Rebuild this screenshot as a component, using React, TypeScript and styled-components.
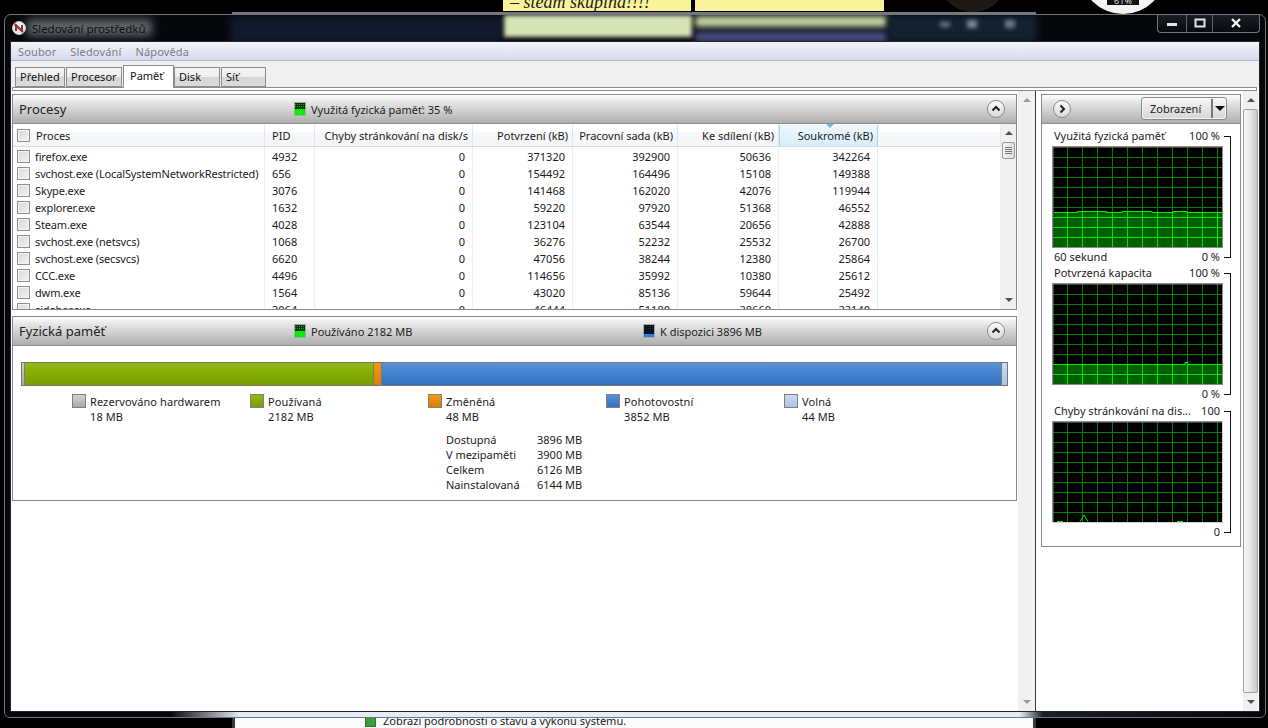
import React from "react";
import styled, { createGlobalStyle } from "styled-components";

const Global = createGlobalStyle`
  html, body { margin: 0; padding: 0; background: #000; }
  * { box-sizing: border-box; }
  #root { width: 1268px; height: 728px; overflow: hidden; }
`;

const UI = `"Noto Sans", "Open Sans", sans-serif`;

const Desktop = styled.div`
  position: relative;
  width: 1268px;
  height: 728px;
  overflow: hidden;
  background: #000;
  font-family: ${UI};
  font-size: 11px;
  color: #1c1c1c;
`;

const Sticky = styled.div<{ $left: number; $width: number }>`
  position: absolute;
  left: ${(p) => p.$left}px;
  top: 0;
  width: ${(p) => p.$width}px;
  height: 11px;
  background: #f9f39a;
  overflow: hidden;
`;
const StickyText = styled.div`
  margin: -8px 0 0 7px;
  font-family: "Liberation Serif", serif;
  font-style: italic;
  font-size: 18px;
  line-height: 20px;
  color: #20201a;
  white-space: nowrap;
`;
const ClockGadget = styled.div`
  position: absolute;
  left: 940px;
  top: -50px;
  width: 66px;
  height: 62px;
  border-radius: 50%;
  background: radial-gradient(circle at 50% 50%, #15140f 0, #1d1c16 78%, #5b584a 90%, #24231c 100%);
`;
const GaugeGadget = styled.div`
  position: absolute;
  left: 1080px;
  top: -72px;
  width: 86px;
  height: 86px;
  border-radius: 50%;
  background: radial-gradient(circle at 50% 50%, #fff 0, #f2f2f2 70%, #cfcfcf 100%);
`;
const GaugeValue = styled.div`
  position: absolute;
  left: 1107px;
  top: 0;
  width: 32px;
  height: 5px;
  background: #111;
  color: #ddd;
  font-size: 9px;
  line-height: 2px;
  text-align: center;
  overflow: hidden;
`;
const BackLine = styled.div`
  position: absolute;
  left: 232px;
  top: 12px;
  width: 804px;
  height: 2px;
  background: #77787c;
`;
const BackWindow = styled.div`
  position: absolute;
  left: 232px;
  top: 700px;
  width: 804px;
  height: 28px;
  border-left: 3px solid #3a3a3a;
  border-right: 3px solid #3a3a3a;
  background: #fbfbfb;
  display: flex;
  align-items: flex-start;
  gap: 7px;
  padding: 14px 0 0 130px;
  font-size: 11px;
  line-height: 14px;
`;
const BackIcon = styled.span`
  width: 11px;
  height: 11px;
  margin-top: 2px;
  background: #38a03a;
  border: 1px solid #2a7a2c;
`;

const Window = styled.div`
  position: absolute;
  left: 4px;
  top: 14px;
  width: 1262px;
  height: 704px;
  border: 1px solid #71767c;
  border-radius: 7px 7px 6px 6px;
  background: #05070b;
  display: flex;
  flex-direction: column;
  padding: 0 5px;
  overflow: hidden;
`;
const GlassBlob = styled.div<{ $l: number; $t: number; $w: number; $h: number; $c: string; $b: number }>`
  position: absolute;
  left: ${(p) => p.$l}px;
  top: ${(p) => p.$t}px;
  width: ${(p) => p.$w}px;
  height: ${(p) => p.$h}px;
  background: ${(p) => p.$c};
  filter: blur(${(p) => p.$b}px);
`;
const TitleBar = styled.div`
  position: relative;
  height: 26px;
  display: flex;
  align-items: center;
  gap: 6px;
  padding: 0 0 0 2px;
  flex: none;
`;
const TitleText = styled.span`
  position: relative;
  font-size: 11.5px;
  letter-spacing: -0.05px;
  color: #0c0e10;
`;
const Controls = styled.div`
  position: absolute;
  right: 0;
  top: -1px;
  width: 103px;
  height: 19px;
  display: grid;
  grid-template-columns: 29px 26px 1fr;
  border: 1px solid #70757c;
  border-top: none;
  border-radius: 0 0 4px 4px;
  background: linear-gradient(#1a1e24, #080a0d);
`;
const ControlBtn = styled.div`
  display: flex;
  align-items: center;
  justify-content: center;
  border-right: 1px solid #5e636a;
  &:last-child { border-right: none; }
`;
const Client = styled.div`
  position: relative;
  height: 671px;
  flex: none;
  border: 1px solid #20262c;
  background: #fff;
  display: flex;
  flex-direction: column;
`;
const BottomGlass = styled.div`
  flex: none;
  height: 5px;
  margin: 0 -5px;
  background: linear-gradient(90deg, #05070b 0, #05070b 165px, #e4edf6 235px, #e4edf6 1015px, #1a2028 1038px, #05070b 100%);
`;

const MenuBar = styled.div`
  height: 19px;
  flex: none;
  display: flex;
  gap: 14px;
  padding: 1px 0 0 7px;
  align-items: center;
  letter-spacing: 0.15px;
  color: #7d7d7d;
  background: linear-gradient(#f3f4fb, #e8ebf6 35%, #d5daf0);
  border-bottom: 1px solid #b5b8ca;
`;
const MenuItem = styled.span``;
const TabStrip = styled.div`
  height: 26px;
  flex: none;
  background: #f0f0f0;
  display: flex;
  align-items: flex-end;
  padding-left: 4px;
  position: relative;
  z-index: 1;
`;
const Tab = styled.div<{ $w: number; $active?: boolean }>`
  width: ${(p) => p.$w}px;
  height: ${(p) => (p.$active ? 23 : 20)}px;
  margin-right: ${(p) => (p.$active ? 0 : 1)}px;
  margin-bottom: ${(p) => (p.$active ? -1 : 0)}px;
  border: 1px solid #8c8c8c;
  border-bottom: ${(p) => (p.$active ? "none" : "1px solid #8c8c8c")};
  background: ${(p) => (p.$active ? "#fff" : "linear-gradient(#f6f6f6, #eeeeee 50%, #d6d6d6 52%, #dcdcdc)")};
  padding: ${(p) => (p.$active ? "2px 0 0 6px" : "1px 0 0 4px")};
  line-height: 15px;
  color: #111;
`;
const TabPanel = styled.div`
  height: 4px;
  flex: none;
  margin: 0 2px 0 1px;
  border: 1px solid #8c8c8c;
  background: #fff;
`;
const Content = styled.div`
  flex: 1;
  display: flex;
  min-height: 0;
`;
const LeftColumn = styled.div`
  width: 1005px;
  margin-left: 1px;
  padding-top: 3px;
  display: flex;
  flex-direction: column;
  gap: 6px;
  flex: none;
`;
const Panel = styled.section<{ $h: number }>`
  height: ${(p) => p.$h}px;
  flex: none;
  border: 1px solid #8a8a8a;
  display: flex;
  flex-direction: column;
  background: #fff;
`;
const PanelHeader = styled.header`
  position: relative;
  height: 29px;
  flex: none;
  display: flex;
  align-items: center;
  background: linear-gradient(#fdfdfd, #e6e6e6 25%, #c9c9c9 65%, #adadad);
  border-bottom: 1px solid #8f8f8f;
  font-size: 11px;
`;
const PanelTitle = styled.h2`
  margin: 0;
  width: 281px;
  padding-left: 6px;
  font-size: 13px;
  font-weight: 400;
  color: #222;
  flex: none;
`;
const Indicator = styled.div<{ $w?: number }>`
  display: flex;
  align-items: center;
  gap: 5px;
  width: ${(p) => (p.$w ? `${p.$w}px` : "auto")};
  flex: none;
  white-space: nowrap;
`;
const RoundWrap = styled.span<{ $left?: boolean }>`
  position: absolute;
  top: 5px;
  ${(p) => (p.$left ? "left: 11px;" : "right: 11px;")}
  width: 18px;
  height: 18px;
`;

const Table = styled.div`
  flex: 1;
  display: flex;
  min-height: 0;
`;
const TableMain = styled.div`
  flex: 1;
  overflow: hidden;
`;
const COLS = "252px 50px 158px 100px 105px 101px 99px 1fr";
const HeadRow = styled.div`
  display: grid;
  grid-template-columns: ${COLS};
  height: 23px;
  margin-bottom: 1px;
  padding-top: 1px;
  background: linear-gradient(#fff, #fff 8px, #f6f7f9 9px, #f4f5f7);
  border-bottom: 1px solid #d9dde2;
`;
const HeadCell = styled.div<{ $right?: boolean; $sorted?: boolean; $pad?: number }>`
  position: relative;
  display: flex;
  align-items: center;
  gap: 6px;
  justify-content: ${(p) => (p.$right ? "flex-end" : "flex-start")};
  padding: ${(p) => (p.$right ? "0 4px 0 0" : `0 0 0 ${p.$pad ?? 4}px`)};
  border-right: 1px solid ${(p) => (p.$sorted ? "#a5d8f5" : "#e2e6eb")};
  ${(p) => (p.$sorted ? "border-left: 1px solid #a5d8f5; background: linear-gradient(#eef8fe, #e5f4fc 40%, #d7eefa);" : "")}
  white-space: nowrap;
`;
const SortMark = styled.span`
  position: absolute;
  top: -1px;
  left: 46px;
  width: 0;
  height: 0;
  border: 4px solid transparent;
  border-top: 4px solid #7fb6dc;
  border-bottom: none;
`;
const Row = styled.div`
  display: grid;
  grid-template-columns: ${COLS};
  height: 17px;
`;
const Cell = styled.div<{ $right?: boolean; $sorted?: boolean; $pad?: number; $tight?: boolean }>`
  display: flex;
  align-items: center;
  gap: 5px;
  justify-content: ${(p) => (p.$right ? "flex-end" : "flex-start")};
  padding: ${(p) => (p.$right ? "0 7px 0 0" : `0 0 0 ${p.$pad ?? 7}px`)};
  border-right: 1px solid ${(p) => (p.$sorted ? "#d5ecfa" : "#e9eef5")};
  white-space: nowrap;
  color: #1a1a1a;
  letter-spacing: ${(p) => (p.$tight ? "-0.14px" : "0")};
`;
const Check = styled.span`
  width: 13px;
  height: 13px;
  flex: none;
  border: 1px solid #8e8f8f;
  background: linear-gradient(135deg, #d8d8d8, #f3f3f3);
  box-shadow: inset 0 0 0 1px #f4f4f4;
`;
const ScrollTrack = styled.div<{ $w: number }>`
  width: ${(p) => p.$w}px;
  flex: none;
  display: flex;
  flex-direction: column;
  background: #f0f0f0;
`;
const ScrollBtn = styled.div<{ $h?: number }>`
  height: ${(p) => p.$h ?? 18}px;
  flex: none;
  display: flex;
  align-items: center;
  justify-content: center;
`;
const Arrow = styled.span<{ $down?: boolean; $c?: string }>`
  width: 0;
  height: 0;
  border-left: 4px solid transparent;
  border-right: 4px solid transparent;
  ${(p) => (p.$down ? `border-top: 4px solid ${p.$c ?? "#505050"};` : `border-bottom: 4px solid ${p.$c ?? "#505050"};`)}
`;
const ScrollSpace = styled.div`
  flex: 1;
`;
const ListThumb = styled.div`
  height: 17px;
  flex: none;
  margin: 0 1px;
  border: 1px solid #9a9a9a;
  border-radius: 2px;
  background: linear-gradient(90deg, #f5f5f5, #dcdcdc);
  display: flex;
  flex-direction: column;
  justify-content: center;
  align-items: center;
  gap: 1px;
`;
const Grip = styled.span`
  width: 7px;
  height: 1px;
  background: #777;
`;
const BigThumb = styled.div`
  flex: 1;
  margin: 0;
  border: 1px solid #a0a0a0;
  border-radius: 2px;
  background: linear-gradient(90deg, #f5f5f5, #e8e8e8 45%, #c8c8c8);
`;

const MemBar = styled.div`
  height: 24px;
  margin: 16px 8px 0;
  display: flex;
  border: 1px solid #767676;
  flex: none;
`;
const MemSeg = styled.div<{ $w?: number; $a: string; $b: string }>`
  ${(p) => (p.$w ? `width: ${p.$w}px; flex: none;` : "flex: 1;")}
  background: linear-gradient(${(p) => p.$a}, ${(p) => p.$b});
  border-right: 1px solid #7b7b7b;
  &:last-child { border-right: none; }
`;
const Legend = styled.div`
  display: grid;
  grid-template-columns: repeat(5, 178px);
  margin: 8px 0 0 59px;
`;
const LegendItem = styled.div`
  display: grid;
  grid-template-columns: 14px auto;
  column-gap: 4px;
  align-items: start;
  line-height: 15px;
  letter-spacing: 0.09px;
`;
const Swatch = styled.span<{ $a: string; $b: string }>`
  width: 14px;
  height: 14px;
  border: 1px solid #808080;
  background: linear-gradient(${(p) => p.$a}, ${(p) => p.$b});
`;
const LegendName = styled.span``;
const LegendValue = styled.span`
  grid-column: 2;
`;
const Stats = styled.div`
  margin: 8px 0 0 433px;
  display: grid;
  grid-template-columns: 91px auto;
  line-height: 15px;
  justify-content: start;
`;
const StatCell = styled.span``;

const MidScroll = styled(ScrollTrack)`
  margin-left: 1px;
  border-right: 1px solid #3c3c3c;
`;
const RightArea = styled.div`
  flex: 1;
  display: flex;
  padding-left: 5px;
  min-width: 0;
`;
const GraphColumn = styled.div`
  width: 200px;
  flex: none;
  padding-top: 3px;
  margin-right: 2px;
`;
const GraphPanel = styled.section`
  height: 453px;
  border: 1px solid #8a8a8a;
  display: flex;
  flex-direction: column;
`;
const ViewButton = styled.div`
  position: absolute;
  right: 13px;
  top: 2px;
  width: 86px;
  height: 23px;
  border: 1px solid #8a8a8a;
  border-radius: 3px;
  background: linear-gradient(#f6f6f6, #e6e6e6 50%, #d6d6d6);
  display: flex;
  align-items: center;
  box-shadow: inset 0 0 0 1px rgba(255, 255, 255, 0.7);
`;
const ViewLabel = styled.span`
  width: 71px;
  padding-left: 8px;
  flex: none;
  border-right: 2px solid #777;
  line-height: 19px;
`;
const ViewArrow = styled.span`
  margin-left: 2px;
  width: 0;
  height: 0;
  border-left: 5px solid transparent;
  border-right: 5px solid transparent;
  border-top: 5px solid #111;
`;
const GraphList = styled.div`
  padding: 5px 0 0 10px;
  display: flex;
  flex-direction: column;
  gap: 1px;
`;
const GraphBlock = styled.div`
  display: flex;
  width: 180px;
  &:last-child { margin-top: 1px; }
`;
const GraphBody = styled.div`
  width: 171px;
  flex: none;
  line-height: 13px;
`;
const GraphTop = styled.div`
  display: flex;
  justify-content: space-between;
  padding: 0 3px 0 2px;
  height: 17px;
  white-space: nowrap;
`;
const GraphBottom = styled(GraphTop)`
  padding-top: 2px;
`;
const Bracket = styled.div`
  width: 7px;
  margin: 7px 0 7px 1px;
  flex: none;
  border: 1.5px solid #111;
  border-left: none;
`;
const GraphSvg = styled.svg`
  display: block;
`;

function RoundButton({ dir, left }: { dir: "up" | "right"; left?: boolean }) {
  const d = dir === "up" ? "M5.5 10.5 L9 7 L12.5 10.5" : "M7.5 5.5 L11 9 L7.5 12.5";
  return (
    <RoundWrap $left={left}>
      <svg width="18" height="18" viewBox="0 0 18 18">
        <defs>
          <linearGradient id="rb" x1="0" y1="0" x2="0" y2="1">
            <stop offset="0" stopColor="#fdfdfd" />
            <stop offset="1" stopColor="#d8d8d8" />
          </linearGradient>
        </defs>
        <circle cx="9" cy="9" r="8.5" fill="url(#rb)" stroke="#8a8a8a" />
        <path d={d} fill="none" stroke="#222" strokeWidth="2" />
      </svg>
    </RoundWrap>
  );
}

function MiniIndicator({ kind }: { kind: "green" | "blue" }) {
  const green = kind === "green";
  return (
    <svg width="12" height="14" viewBox="0 0 12 14">
      <rect x="0.5" y="0.5" width="11" height="13" fill={green ? "#00f000" : "#2f7de0"} stroke="#a8a8a8" />
      <rect x="1" y="1" width="10" height={green ? 6 : 9} fill={green ? "#063406" : "#06121c"} />
      <path d="M1 2.5H11M1 4.5H11" stroke={green ? "#1d9a1d" : "#10314e"} strokeWidth="1" strokeDasharray="1 1" />
    </svg>
  );
}

function AppLogo() {
  return (
    <svg width="14" height="14" viewBox="0 0 14 14">
      <circle cx="7" cy="7" r="6.5" fill="#ecebe8" stroke="#c9c6c0" />
      <path d="M4 10V4L10 10V4" fill="none" stroke="#1d2430" strokeWidth="1.6" />
      <path d="M2.5 3.5L11 11" stroke="#d21f1f" strokeWidth="1.8" />
    </svg>
  );
}

function Graph({ line, fillTop, spike }: { line?: string; fillTop?: number; spike?: boolean }) {
  const w = 171;
  const h = 102;
  const vs = Array.from({ length: 11 }, (_, i) => 15 * (i + 1));
  const hs = Array.from({ length: 9 }, (_, i) => 11 + 10 * i);
  return (
    <GraphSvg width={w} height={h} viewBox={`0 0 ${w} ${h}`}>
      <rect width={w} height={h} fill="#000" />
      {vs.map((x) => (
        <line key={x} x1={x + 0.5} x2={x + 0.5} y1={0} y2={h} stroke="#008000" />
      ))}
      {hs.map((y) => (
        <line key={y} y1={y + 0.5} y2={y + 0.5} x1={0} x2={w} stroke="#008000" />
      ))}
      {line && fillTop !== undefined && (
        <g>
          <path d={`${line}V102H2Z`} fill="#006000" />
          {vs.map((x) => (
            <line key={x} x1={x + 0.5} x2={x + 0.5} y1={fillTop} y2={h} stroke="#00e400" />
          ))}
          {hs
            .filter((y) => y > fillTop)
            .map((y) => (
              <line key={y} y1={y + 0.5} y2={y + 0.5} x1={0} x2={w} stroke="#00e400" />
            ))}
          <path d={line} fill="none" stroke="#00ee00" strokeWidth="1" />
        </g>
      )}
      {spike && (
        <path d="M5 100.5H11M28 100.5L32 94L36 100.5M125 100.5H131" fill="none" stroke="#00ee00" strokeWidth="1" />
      )}
      <path d={`M0.5 ${h}V0.5H${w - 0.5}`} fill="none" stroke="#8c8c8c" strokeWidth="2" />
      <path d={`M0 ${h - 0.5}H${w - 0.5}V0`} fill="none" stroke={spike ? "#cfcfcf" : "#8c8c8c"} strokeWidth="1" />
    </GraphSvg>
  );
}

const LINE1 = "M2 66.5H25V65.5H55V66.5H70V65.5H100V66.5H121V65.5H135V66.5H171";
const LINE2 = "M2 81.5H133V79.5H136V81.5H171";

const rows: [string, number, number, number, number, number, number][] = [
  ["firefox.exe", 4932, 0, 371320, 392900, 50636, 342264],
  ["svchost.exe (LocalSystemNetworkRestricted)", 656, 0, 154492, 164496, 15108, 149388],
  ["Skype.exe", 3076, 0, 141468, 162020, 42076, 119944],
  ["explorer.exe", 1632, 0, 59220, 97920, 51368, 46552],
  ["Steam.exe", 4028, 0, 123104, 63544, 20656, 42888],
  ["svchost.exe (netsvcs)", 1068, 0, 36276, 52232, 25532, 26700],
  ["svchost.exe (secsvcs)", 6620, 0, 47056, 38244, 12380, 25864],
  ["CCC.exe", 4496, 0, 114656, 35992, 10380, 25612],
  ["dwm.exe", 1564, 0, 43020, 85136, 59644, 25492],
  ["sidebar.exe", 3064, 0, 46444, 51180, 28660, 22140],
];

const legend = [
  { name: "Rezervováno hardwarem", value: "18 MB", a: "#d2d2d2", b: "#a9a9a9" },
  { name: "Používaná", value: "2182 MB", a: "#8fba0b", b: "#789e00" },
  { name: "Změněná", value: "48 MB", a: "#f39a10", b: "#db7e00" },
  { name: "Pohotovostní", value: "3852 MB", a: "#5a90d6", b: "#3272c4" },
  { name: "Volná", value: "44 MB", a: "#c9dcf2", b: "#a9c5e8" },
];

const stats = [
  ["Dostupná", "3896 MB"],
  ["V mezipaměti", "3900 MB"],
  ["Celkem", "6126 MB"],
  ["Nainstalovaná", "6144 MB"],
];

export default function App() {
  return (
    <Desktop>
      <Global />
      <Sticky $left={503} $width={188}>
        <StickyText>– steam skupina!!!!</StickyText>
      </Sticky>
      <Sticky $left={695} $width={189} />
      <ClockGadget />
      <GaugeGadget />
      <GaugeValue>61%</GaugeValue>
      <BackLine />
      <BackWindow>
        <BackIcon />
        Zobrazí podrobnosti o stavu a výkonu systému.
      </BackWindow>
      <Window>
        <GlassBlob $l={22} $t={4} $w={125} $h={17} $c="#62666a" $b={5} />
        <GlassBlob $l={225} $t={2} $w={273} $h={26} $c="#111a2c" $b={3} />
        <GlassBlob $l={499} $t={0} $w={188} $h={22} $c="#d6e3b2" $b={2} />
        <GlassBlob $l={690} $t={1} $w={193} $h={11} $c="#c9d9a6" $b={3} />
        <GlassBlob $l={690} $t={17} $w={193} $h={10} $c="#4c5288" $b={3} />
        <GlassBlob $l={882} $t={0} $w={150} $h={27} $c="#14222f" $b={3} />
        <GlassBlob $l={935} $t={7} $w={10} $h={5} $c="#6a7a8a" $b={2} />
        <GlassBlob $l={962} $t={5} $w={10} $h={8} $c="#7a8a9a" $b={2} />
        <GlassBlob $l={1000} $t={5} $w={10} $h={8} $c="#6a7a8a" $b={2} />
        <TitleBar>
          <AppLogo />
          <TitleText>Sledování prostředků</TitleText>
          <Controls>
            <ControlBtn>
              <svg width="12" height="8" viewBox="0 0 12 8">
                <rect x="1" y="4" width="10" height="3" fill="#e4e7ea" />
              </svg>
            </ControlBtn>
            <ControlBtn>
              <svg width="12" height="10" viewBox="0 0 12 10">
                <rect x="1.5" y="1.5" width="9" height="7" fill="none" stroke="#e4e7ea" strokeWidth="2" />
              </svg>
            </ControlBtn>
            <ControlBtn>
              <svg width="12" height="10" viewBox="0 0 12 10">
                <path d="M2 1L10 9M10 1L2 9" stroke="#eef0f2" strokeWidth="2.4" />
              </svg>
            </ControlBtn>
          </Controls>
        </TitleBar>
        <Client>
          <MenuBar>
            <MenuItem>Soubor</MenuItem>
            <MenuItem>Sledování</MenuItem>
            <MenuItem>Nápověda</MenuItem>
          </MenuBar>
          <TabStrip>
            <Tab $w={50}>Přehled</Tab>
            <Tab $w={56}>Procesor</Tab>
            <Tab $w={51} $active>
              Paměť
            </Tab>
            <Tab $w={46}>Disk</Tab>
            <Tab $w={45}>Síť</Tab>
          </TabStrip>
          <TabPanel />
          <Content>
            <LeftColumn>
              <Panel $h={216}>
                <PanelHeader>
                  <PanelTitle>Procesy</PanelTitle>
                  <Indicator>
                    <MiniIndicator kind="green" />
                    Využitá fyzická paměť: 35 %
                  </Indicator>
                  <RoundButton dir="up" />
                </PanelHeader>
                <Table>
                  <TableMain>
                    <HeadRow>
                      <HeadCell>
                        <Check />
                        Proces
                      </HeadCell>
                      <HeadCell $pad={7}>PID</HeadCell>
                      <HeadCell $right>Chyby stránkování na disk/s</HeadCell>
                      <HeadCell $right>Potvrzení (kB)</HeadCell>
                      <HeadCell $right>Pracovní sada (kB)</HeadCell>
                      <HeadCell $right>Ke sdílení (kB)</HeadCell>
                      <HeadCell $right $sorted>
                        <SortMark />
                        Soukromé (kB)
                      </HeadCell>
                      <HeadCell />
                    </HeadRow>
                    {rows.map((r) => (
                      <Row key={r[0]}>
                        <Cell $pad={4} $tight>
                          <Check />
                          {r[0]}
                        </Cell>
                        <Cell>{r[1]}</Cell>
                        <Cell $right>{r[2]}</Cell>
                        <Cell $right>{r[3]}</Cell>
                        <Cell $right>{r[4]}</Cell>
                        <Cell $right>{r[5]}</Cell>
                        <Cell $right $sorted>
                          {r[6]}
                        </Cell>
                        <Cell />
                      </Row>
                    ))}
                  </TableMain>
                  <ScrollTrack $w={15}>
                    <ScrollBtn>
                      <Arrow />
                    </ScrollBtn>
                    <ListThumb>
                      <Grip />
                      <Grip />
                      <Grip />
                      <Grip />
                    </ListThumb>
                    <ScrollSpace />
                    <ScrollBtn>
                      <Arrow $down />
                    </ScrollBtn>
                  </ScrollTrack>
                </Table>
              </Panel>
              <Panel $h={185}>
                <PanelHeader>
                  <PanelTitle>Fyzická paměť</PanelTitle>
                  <Indicator $w={349}>
                    <MiniIndicator kind="green" />
                    Používáno 2182 MB
                  </Indicator>
                  <Indicator>
                    <MiniIndicator kind="blue" />
                    K dispozici 3896 MB
                  </Indicator>
                  <RoundButton dir="up" />
                </PanelHeader>
                <MemBar>
                  <MemSeg $w={3} $a="#cfcfcf" $b="#a8a8a8" />
                  <MemSeg $w={349} $a="#8fba0b" $b="#789e00" />
                  <MemSeg $w={8} $a="#f39a10" $b="#db7e00" />
                  <MemSeg $w={620} $a="#5a90d6" $b="#3272c4" />
                  <MemSeg $a="#c9dcf2" $b="#a9c5e8" />
                </MemBar>
                <Legend>
                  {legend.map((l) => (
                    <LegendItem key={l.name}>
                      <Swatch $a={l.a} $b={l.b} />
                      <LegendName>{l.name}</LegendName>
                      <LegendValue>{l.value}</LegendValue>
                    </LegendItem>
                  ))}
                </Legend>
                <Stats>
                  {stats.map(([k, v]) => (
                    <React.Fragment key={k}>
                      <StatCell>{k}</StatCell>
                      <StatCell>{v}</StatCell>
                    </React.Fragment>
                  ))}
                </Stats>
              </Panel>
            </LeftColumn>
            <MidScroll $w={18}>
              <ScrollBtn>
                <Arrow $c="#9a9a9a" />
              </ScrollBtn>
              <ScrollSpace />
              <ScrollBtn>
                <Arrow $down $c="#9a9a9a" />
              </ScrollBtn>
            </MidScroll>
            <RightArea>
              <GraphColumn>
                <GraphPanel>
                  <PanelHeader>
                    <RoundButton dir="right" left />
                    <ViewButton>
                      <ViewLabel>Zobrazení</ViewLabel>
                      <ViewArrow />
                    </ViewButton>
                  </PanelHeader>
                  <GraphList>
                    <GraphBlock>
                      <GraphBody>
                        <GraphTop>
                          <span>Využitá fyzická paměť</span>
                          <span>100 %</span>
                        </GraphTop>
                        <Graph line={LINE1} fillTop={66} />
                        <GraphBottom>
                          <span>60 sekund</span>
                          <span>0 %</span>
                        </GraphBottom>
                      </GraphBody>
                      <Bracket />
                    </GraphBlock>
                    <GraphBlock>
                      <GraphBody>
                        <GraphTop>
                          <span>Potvrzená kapacita</span>
                          <span>100 %</span>
                        </GraphTop>
                        <Graph line={LINE2} fillTop={81} />
                        <GraphBottom>
                          <span />
                          <span>0 %</span>
                        </GraphBottom>
                      </GraphBody>
                      <Bracket />
                    </GraphBlock>
                    <GraphBlock>
                      <GraphBody>
                        <GraphTop>
                          <span>Chyby stránkování na dis...</span>
                          <span>100</span>
                        </GraphTop>
                        <Graph spike />
                        <GraphBottom>
                          <span />
                          <span>0</span>
                        </GraphBottom>
                      </GraphBody>
                      <Bracket />
                    </GraphBlock>
                  </GraphList>
                </GraphPanel>
              </GraphColumn>
              <ScrollTrack $w={15}>
                <ScrollBtn>
                  <Arrow />
                </ScrollBtn>
                <BigThumb />
                <ScrollBtn>
                  <Arrow $down />
                </ScrollBtn>
              </ScrollTrack>
            </RightArea>
          </Content>
        </Client>
        <BottomGlass />
      </Window>
    </Desktop>
  );
}
